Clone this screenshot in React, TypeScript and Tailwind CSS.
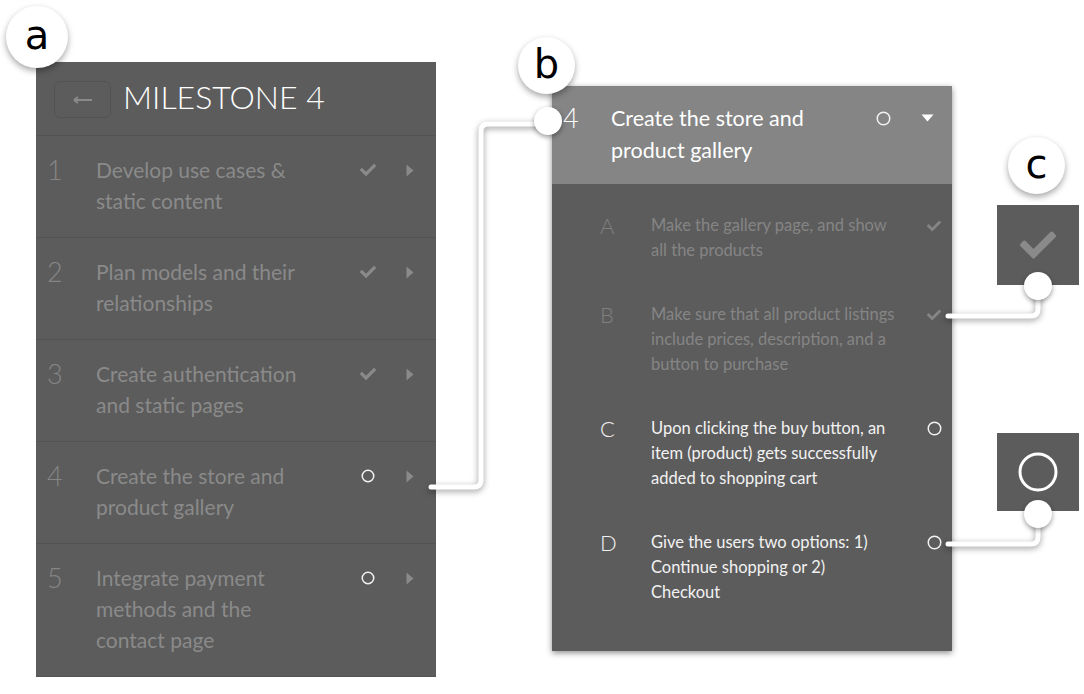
import { FaCheck } from "react-icons/fa";

const font = { fontFamily: "Lato, 'Noto Sans', sans-serif" };

const milestones = [
  { n: "1", lines: ["Develop use cases &", "static content"], done: true, tall: false },
  { n: "2", lines: ["Plan models and their", "relationships"], done: true, tall: false },
  { n: "3", lines: ["Create authentication", "and static pages"], done: true, tall: false },
  { n: "4", lines: ["Create the store and", "product gallery"], done: false, tall: false },
  { n: "5", lines: ["Integrate payment", "methods and the", "contact page"], done: false, tall: true },
];

const tasks = [
  { l: "A", lines: ["Make the gallery page, and show", "all the products"], done: true },
  { l: "B", lines: ["Make sure that all product listings", "include prices, description, and a", "button to purchase"], done: true },
  { l: "C", lines: ["Upon clicking the buy button, an", "item (product) gets successfully", "added to shopping cart"], done: false },
  { l: "D", lines: ["Give the users two options: 1)", "Continue shopping or 2)", "Checkout"], done: false },
];

function Ring({ size = 14, stroke = 1.5, color = "#f2f2f2" }: { size?: number; stroke?: number; color?: string }) {
  return (
    <svg width={size} height={size} viewBox={`0 0 ${size} ${size}`}>
      <circle cx={size / 2} cy={size / 2} r={size / 2 - stroke / 2 - 0.5} fill="none" stroke={color} strokeWidth={stroke} />
    </svg>
  );
}

function CaretRight() {
  return (
    <svg width="8" height="13" viewBox="0 0 8 13">
      <polygon points="0.5,0.5 7.5,6.5 0.5,12.5" fill="#8a8a8a" />
    </svg>
  );
}

function CaretDown() {
  return (
    <svg width="13" height="8" viewBox="0 0 13 8">
      <polygon points="0.5,0.5 12.5,0.5 6.5,7.5" fill="#ffffff" />
    </svg>
  );
}

function Label({ ch, className }: { ch: string; className: string }) {
  return (
    <div
      className={`absolute flex items-center justify-center rounded-full bg-white text-black shadow-[0_3px_6px_rgba(0,0,0,0.35)] ${className}`}
      style={{ fontFamily: "'DejaVu Sans', 'Liberation Sans', sans-serif" }}
    >
      {ch}
    </div>
  );
}

function Node({ className }: { className: string }) {
  return <div className={`absolute h-[28px] w-[28px] rounded-full bg-white shadow-[0_2px_5px_rgba(0,0,0,0.4)] ${className}`} />;
}

export default function App() {
  return (
    <div className="relative h-[694px] w-[1084px] overflow-hidden bg-white" style={font}>
      <div className="flex items-start">
        {/* panel a */}
        <div className="ml-[36px] mt-[62px] w-[400px] bg-[#5c5c5c]">
          <div className="flex h-[74px] items-start border-b border-[#535353]">
            <div className="ml-[18px] mt-[19px] flex h-[37px] w-[57px] items-center justify-center rounded-md border border-[#535353]">
              <svg width="20" height="8" viewBox="0 0 20 8">
                <path d="M1 4 H19 M1 4 L5 1 M1 4 L5 7" stroke="#8a8a8a" strokeWidth="2" fill="none" />
              </svg>
            </div>
            <div className="ml-[12px] mt-[15px] text-[32px] font-light leading-[40px] text-white">MILESTONE 4</div>
          </div>
          {milestones.map((m) => (
            <div
              key={m.n}
              className={`flex items-start border-b border-[#535353] pt-[18px] ${m.tall ? "h-[133px]" : "h-[102px]"}`}
            >
              <div className="w-[60px] pl-[11px] text-[27px] font-light leading-[32px] text-[#868686]">{m.n}</div>
              <div className="w-[256px] text-[21px] leading-[31px] text-[#8a8a8a]">
                {m.lines.map((l) => (
                  <div key={l}>{l}</div>
                ))}
              </div>
              <div className="flex h-[32px] w-[32px] items-center justify-center">
                {m.done ? <FaCheck className="text-[16px] text-[#8a8a8a]" /> : <Ring />}
              </div>
              <div className="ml-[10px] flex h-[32px] w-[32px] items-center justify-center">
                <CaretRight />
              </div>
            </div>
          ))}
        </div>

        {/* panel b */}
        <div className="ml-[116px] mt-[86px] w-[400px] bg-[#5c5c5c] shadow-[0_2px_6px_rgba(0,0,0,0.45)]">
          <div className="flex h-[98px] items-start bg-[#858585] pt-[16px]">
            <div className="w-[59px] pl-[11px] text-[27px] font-light leading-[32px] text-white">4</div>
            <div className="w-[250px] text-[21.5px] leading-[32px] text-white">
              <div>Create the store and</div>
              <div>product gallery</div>
            </div>
            <div className="ml-[8px] flex h-[32px] w-[28px] items-center justify-center">
              <Ring size={15} />
            </div>
            <div className="ml-[16px] flex h-[32px] w-[28px] items-center justify-center">
              <CaretDown />
            </div>
          </div>
          <div className="flex flex-col gap-[39px] pb-[46px] pt-[29px]">
            {tasks.map((t) => (
              <div key={t.l} className="flex items-start">
                <div
                  className={`ml-[48px] w-[51px] text-[22px] font-light leading-[25px] ${t.done ? "text-[#7f7f7f]" : "text-[#f2f2f2]"}`}
                >
                  {t.l}
                </div>
                <div className={`w-[246px] text-[16.5px] leading-[25px] ${t.done ? "text-[#858585]" : "text-[#f2f2f2]"}`}>
                  {t.lines.map((l) => (
                    <div key={l}>{l}</div>
                  ))}
                </div>
                <div className="ml-[23px] flex h-[25px] w-[28px] items-center justify-center">
                  {t.done ? <FaCheck className="text-[14px] text-[#858585]" /> : <Ring size={15} />}
                </div>
              </div>
            ))}
          </div>
        </div>

        {/* panel c */}
        <div className="ml-[45px] flex flex-col gap-[148px] pt-[205px]">
          <div className="flex h-[80px] w-[82px] items-center justify-center bg-[#5c5c5c]">
            <FaCheck className="text-[36px] text-[#8a8a8a]" />
          </div>
          <div className="flex h-[78px] w-[82px] items-center justify-center bg-[#5c5c5c]">
            <Ring size={40} stroke={3} color="#ffffff" />
          </div>
        </div>
      </div>

      {/* connectors */}
      <svg
        className="pointer-events-none absolute left-0 top-0 drop-shadow-[0_2px_3px_rgba(0,0,0,0.4)]"
        width="1084"
        height="694"
        viewBox="0 0 1084 694"
      >
        <g fill="none" stroke="#ffffff" strokeWidth="5" strokeLinecap="round" strokeLinejoin="round">
          <path d="M431 487 H474 Q481 487 481 480 V131 Q481 124 488 124 H540" />
          <path d="M948 316 H1031 Q1038 316 1038 309 V290" />
          <path d="M948 544 H1031 Q1038 544 1038 537 V518" />
        </g>
      </svg>
      <Node className="left-[534px] top-[107px]" />
      <Node className="left-[1024px] top-[272px]" />
      <Node className="left-[1024px] top-[500px]" />

      <Label ch="a" className="left-[6px] top-[6px] h-[62px] w-[62px] pb-[4px] text-[40px]" />
      <Label ch="b" className="left-[518px] top-[37px] h-[57px] w-[57px] pb-[4px] text-[40px]" />
      <Label ch="c" className="left-[1008px] top-[137px] h-[57px] w-[57px] pb-[4px] text-[40px]" />
    </div>
  );
}
